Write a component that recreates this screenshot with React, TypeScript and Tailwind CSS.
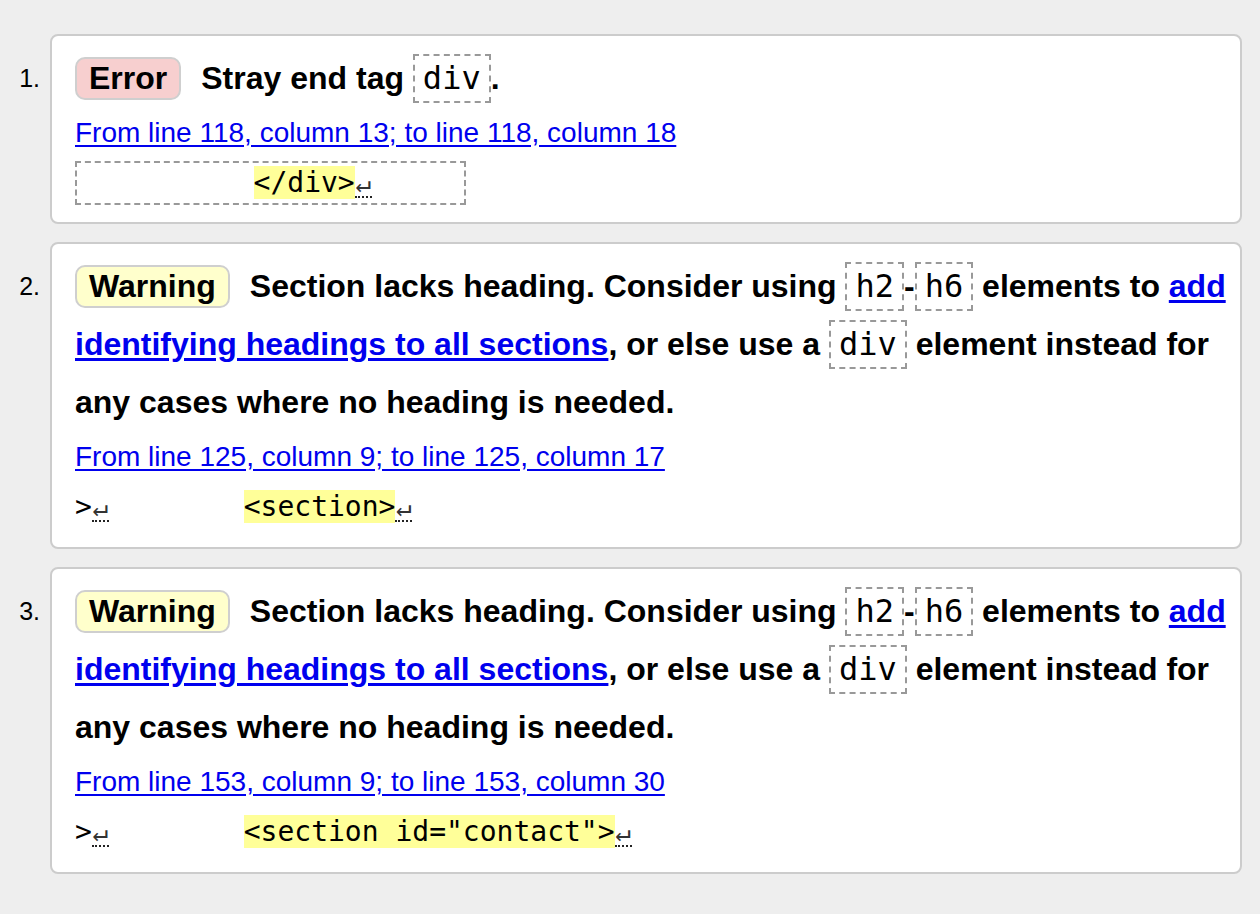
import type { ReactNode } from "react";

const mono = "font-['DejaVu_Sans_Mono',monospace]";

function Code({ children }: { children: ReactNode }) {
  return (
    <code
      className={`${mono} inline-block border-2 border-dashed border-[#999] px-[8px] text-[32px] leading-[45px] font-normal text-black`}
    >
      {children}
    </code>
  );
}

function Mark({ children }: { children: ReactNode }) {
  return <mark className="bg-[#ffff99] text-black">{children}</mark>;
}

function Return() {
  return (
    <span className="inline-block w-[17px] text-center text-[26px] leading-[26px] text-[#333] border-b-2 border-dotted border-[#222]">
      ↵
    </span>
  );
}

function Badge({ kind }: { kind: "Error" | "Warning" }) {
  const bg = kind === "Error" ? "bg-[#f7cfcf]" : "bg-[#ffffcc]";
  return (
    <span
      className={`${bg} inline-block border-2 border-[#cfcfcf] rounded-[10px] px-[12px] leading-[39px] mr-[20px]`}
    >
      {kind}
    </span>
  );
}

function Item({ n, children }: { n: number; children: ReactNode }) {
  return (
    <li className="flex">
      <div className="w-[50px] shrink-0 pt-[15px] pr-[10px] text-right text-[25px] leading-[58px] text-black">
        {n}.
      </div>
      <div className="flex-1 bg-white border-2 border-[#cccccc] rounded-[8px] pl-[23px] pr-[4px] pt-[13px] pb-[17px]">
        {children}
      </div>
    </li>
  );
}

function Location({ text }: { text: string }) {
  return (
    <p className="mt-[10px] text-[28px] leading-[32px]">
      <a href="#" className="text-[#0000ee] underline underline-offset-[3px]">
        {text}
      </a>
    </p>
  );
}

function SectionWarning({ from, tag }: { from: string; tag: string }) {
  return (
    <>
      <p className="text-[32px] leading-[58px] font-bold text-black">
        <Badge kind="Warning" />
        Section lacks heading. Consider using <Code>h2</Code>-<Code>h6</Code>{" "}
        elements to{" "}
        <a href="#" className="text-[#0000ee] underline underline-offset-[3px]">
          add identifying headings to all sections
        </a>
        , or else use a <Code>div</Code> element instead for any cases where no
        heading is needed.
      </p>
      <Location text={from} />
      {/* source extract */}
      <div className={`${mono} mt-[12px] pt-[6px] pb-[7px] text-[28px] leading-[32px] whitespace-pre text-black`}>
        {">"}
        <Return />
        {"        "}
        <Mark>{tag}</Mark>
        <Return />
      </div>
    </>
  );
}

export default function App() {
  return (
    <div className="min-h-screen bg-[#eeeeee] pt-[34px] pr-[18px] pb-[40px] font-['Liberation_Sans',Arial,sans-serif]">
      <ol className="flex flex-col gap-[18px]">
        <Item n={1}>
          <p className="text-[32px] leading-[58px] font-bold text-black">
            <Badge kind="Error" />
            Stray end tag <Code>div</Code>.
          </p>
          <Location text="From line 118, column 13; to line 118, column 18" />
          <div className="mt-[12px]">
            <code
              className={`${mono} inline-block border-2 border-dashed border-[#999] px-[8px] py-[4px] text-[28px] leading-[32px] whitespace-pre text-black`}
            >
              {"          "}
              <Mark>{"</div>"}</Mark>
              <Return />
              {"     "}
            </code>
          </div>
        </Item>

        <Item n={2}>
          <SectionWarning
            from="From line 125, column 9; to line 125, column 17"
            tag="<section>"
          />
        </Item>

        <Item n={3}>
          <SectionWarning
            from="From line 153, column 9; to line 153, column 30"
            tag={'<section id="contact">'}
          />
        </Item>
      </ol>
    </div>
  );
}
